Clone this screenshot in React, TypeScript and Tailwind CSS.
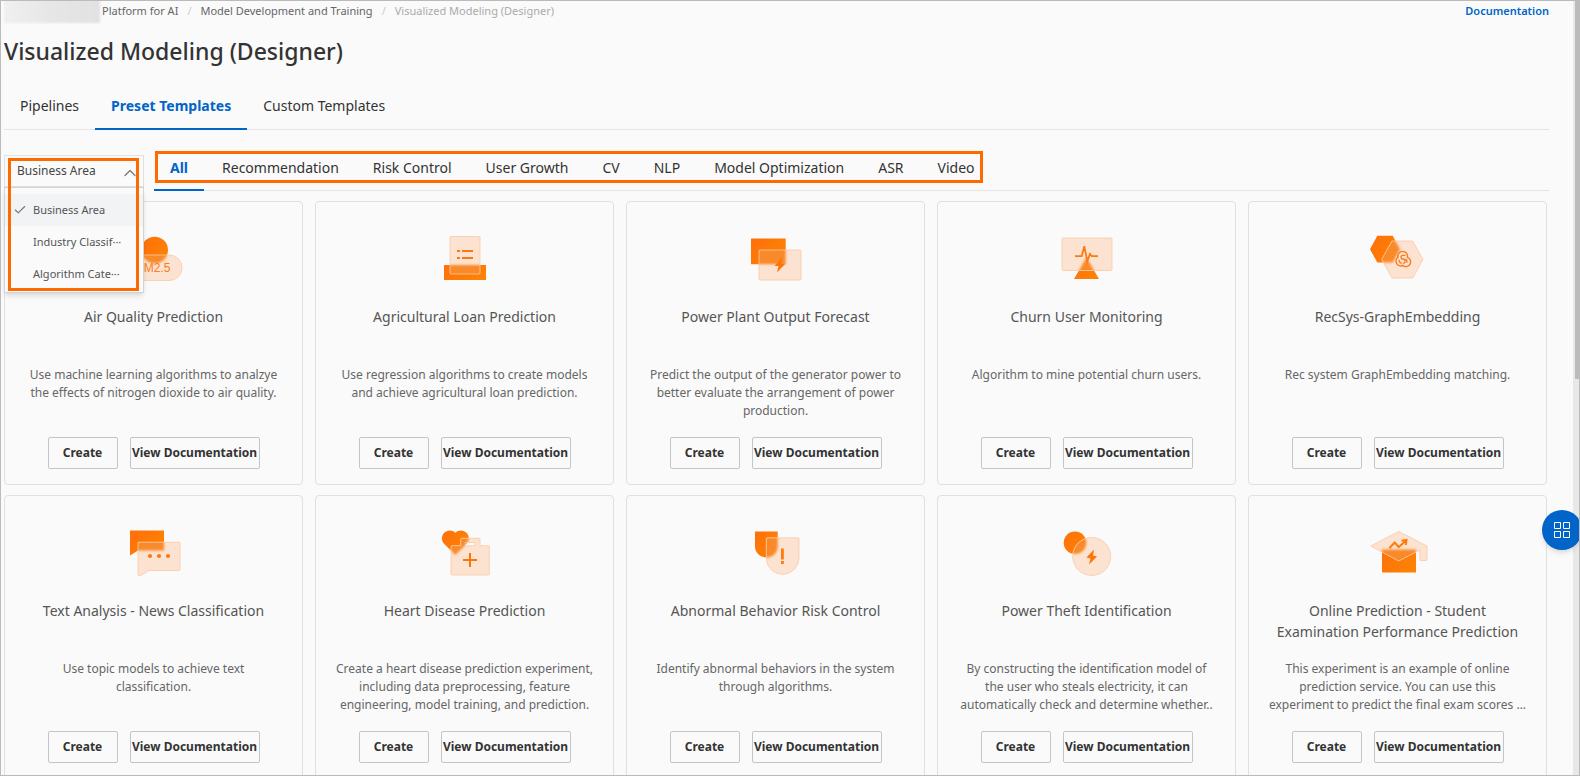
import { useId, useState } from 'react';
import type { ReactNode } from 'react';
import { Check, ChevronUp } from 'lucide-react';

type Art = { back: ReactNode; front: ReactNode; mark: ReactNode };

type Template = { title: string; description: string; art: Art };

const templates: Template[] = [
  {
    title: 'Air Quality Prediction',
    description: 'Use machine learning algorithms to analzye the effects of nitrogen dioxide to air quality.',
    art: {
      back: <circle cx="32.7" cy="16" r="13.3" />,
      front: <rect x="3" y="21" width="57" height="25.5" rx="12.7" />,
      mark: (
        <text x="31" y="38" textAnchor="middle" className="fill-[#ff7a1a] font-['Liberation_Sans'] text-[12px]">
          PM2.5
        </text>
      ),
    },
  },
  {
    title: 'Agricultural Loan Prediction',
    description: 'Use regression algorithms to create models and achieve agricultural loan prediction.',
    art: {
      back: <rect x="11" y="31" width="42" height="15" rx="0.5" />,
      front: <rect x="17" y="2.5" width="30" height="37.5" rx="1" />,
      mark: (
        <path d="M24 17h3M24 24h3M29 17h11M29 24h11" fill="none" stroke="#fb7a16" strokeWidth="2.2" />
      ),
    },
  },
  {
    title: 'Power Plant Output Forecast',
    description: 'Predict the output of the generator power to better evaluate the arrangement of power production.',
    art: {
      back: <rect x="7" y="4.5" width="34.7" height="25.7" rx="0.5" />,
      front: <rect x="15" y="16" width="42" height="30" rx="1" />,
      mark: <path d="M38 23.500l-7.500 8.500h4l-1.500 6.500 8.500-9h-4z" fill="#ff7505" />,
    },
  },
  {
    title: 'Churn User Monitoring',
    description: 'Algorithm to mine potential churn users.',
    art: {
      back: <path d="M31.500 23.500L44 45H19z" />,
      front: <rect x="7" y="4" width="50" height="32.5" rx="1" />,
      mark: (
        <path
          d="M20 22.200h6.700l2.600-10 3 15 2.700-7.400 1.700 2.400H43"
          fill="none"
          stroke="#fc7a12"
          strokeWidth="1.8"
        />
      ),
    },
  },
  {
    title: 'RecSys-GraphEmbedding',
    description: 'Rec system GraphEmbedding matching.',
    art: {
      back: <path d="M4 15.200L11.300 1.800h15.400L34 15.200 26.700 28.500H11.300z" />,
      front: <path d="M15.700 25.300L26 7h20.700L57 25.300 46.700 44H26z" />,
      mark: (
        <g fill="none" stroke="#fb7d1c" strokeWidth="1.4">
          <path d="M32.200 23.800a4.800 4.800 0 1 1 9 0" />
          <path d="M41.200 23.400a4.700 4.700 0 1 1-4.400 8" />
          <path d="M37.400 31.200a4.700 4.700 0 1 1-5.200-8" />
          <path d="M39.600 21.400h-2.800c-2.400 0-2.400 3.600 0 3.600 2.800 0 3.400 3.400.4 4.600" />
          <path d="M33.200 25.600c-.2 2.400 1 3.600 2.600 3.600" />
          <path d="M39.400 25.200c1.600.6 2 2 1.200 3.400" />
        </g>
      ),
    },
  },
  {
    title: 'Text Analysis - News Classification',
    description: 'Use topic models to achieve text\nclassification.',
    art: {
      back: <path d="M8 2.500h34v20H16l-8 5z" />,
      front: <path d="M17 14.200h40a1 1 0 0 1 1 1v26.300a1 1 0 0 1-1 1H27L18 48q-2 .5-2-1.500V15.200a1 1 0 0 1 1-1z" />,
      mark: (
        <g fill="#fb7a16">
          <circle cx="28" cy="28" r="2.1" />
          <circle cx="37" cy="28" r="2.1" />
          <circle cx="46" cy="28" r="2.1" />
        </g>
      ),
    },
  },
  {
    title: 'Heart Disease Prediction',
    description:
      'Create a heart disease prediction experiment, including data preprocessing, feature engineering, model training, and prediction.',
    art: {
      back: <path d="M22.400 4.700C19 1.500 14 1.700 11 5c-3 3.300-2.700 8 .3 11L22.400 27l11-11c3-3 3.300-7.700.3-11C30.700 1.700 25.700 1.500 22.400 4.700z" />,
      front: (
        <path
          clipRule="evenodd"
          fillRule="evenodd"
          d="M19 17.700h8.700v-6.400a1 1 0 0 1 1-1H46a1 1 0 0 1 1 1v6.400h8.300a1 1 0 0 1 1 1v27.300a1 1 0 0 1-1 1H19a1 1 0 0 1-1-1V18.700a1 1 0 0 1 1-1zM32.300 14.500v3.200H42v-3.200z"
        />
      ),
      mark: <path d="M30 32h14M37 25v14" fill="none" stroke="#ff7505" strokeWidth="2" />,
    },
  },
  {
    title: 'Abnormal Behavior Risk Control',
    description: 'Identify abnormal behaviors in the system through algorithms.',
    art: {
      back: <path d="M11 3.500h22.700v14.700a11.350 11.350 0 0 1-22.700 0z" />,
      front: <path d="M22.300 10.800q0-1 1-1H54q1 0 1 1V30a16.350 16.350 0 0 1-32.700 0z" />,
      mark: <path d="M38.400 20.500v11M38.400 33v3" fill="none" stroke="#ff7a0a" strokeWidth="2.800" />,
    },
  },
  {
    title: 'Power Theft Identification',
    description:
      'By constructing the identification model of the user who steals electricity, it can automatically check and determine whether..',
    art: {
      back: <circle cx="20" cy="14.700" r="11.300" />,
      front: <circle cx="36.700" cy="28.500" r="19" />,
      mark: <path d="M39 21.500l-7.500 8 4 1-1.500 6 8-8-4-1z" fill="#ff7505" />,
    },
  },
  {
    title: 'Online Prediction - Student Examination Performance Prediction',
    description:
      'This experiment is an example of online prediction service. You can use this experiment to predict the final exam scores ...',
    art: {
      back: <rect x="16" y="21.500" width="34" height="23" rx="0.500" />,
      front: <path d="M4.700 18L32.700 3.500 61 18v13.500q0 1-1 1h-5q-1 0-1-1V22L32.700 33z" />,
      mark: (
        <path
          d="M23.300 20.300l5.400-5.800 4 4.500 7-6M35.500 12.700l5-.7-.6 5"
          fill="none"
          stroke="#ff7a0a"
          strokeWidth="2"
        />
      ),
    },
  },
];

const mainTabs = ['Pipelines', 'Preset Templates', 'Custom Templates'];

const areas = [
  'All',
  'Recommendation',
  'Risk Control',
  'User Growth',
  'CV',
  'NLP',
  'Model Optimization',
  'ASR',
  'Video',
];

const groupings = [
  { value: 'Business Area', label: 'Business Area' },
  { value: 'Industry Classification', label: 'Industry Classif···' },
  { value: 'Algorithm Category', label: 'Algorithm Cate···' },
];

// Solid orange shape behind a frosted pane, with a small symbol on top
function GlassIcon({ art }: { art: Art }) {
  const id = useId();
  return (
    <svg className="h-12 w-16" viewBox="0 0 64 48" aria-hidden="true">
      <defs>
        <linearGradient id={`${id}g`} x1="0" y1="0" x2="1" y2="0.6">
          <stop offset="0" stopColor="#ff6f0a" />
          <stop offset="1" stopColor="#fd8204" />
        </linearGradient>
        <clipPath id={`${id}c`}>{art.front}</clipPath>
        <filter id={`${id}b`} x="-20%" y="-20%" width="140%" height="140%">
          <feGaussianBlur stdDeviation="1.2" />
        </filter>
      </defs>
      <g fill={`url(#${id}g)`}>{art.back}</g>
      <g fill="#fce2d0">{art.front}</g>
      <g clipPath={`url(#${id}c)`}>
        <g fill="#f98a2c" filter={`url(#${id}b)`}>
          {art.back}
        </g>
      </g>
      <g fill="none" stroke="#fbc9a6" strokeWidth="0.8">
        {art.front}
      </g>
      {art.mark}
    </svg>
  );
}

function TemplateCard({ template }: { template: Template }) {
  return (
    <article className="flex h-[284px] flex-col items-center rounded border border-[#e0e0e0] px-4 pt-8 text-center">
      <GlassIcon art={template.art} />
      <h2 className="mt-6 h-[60px] px-2 text-[14px] leading-[21px] text-[#555]">{template.title}</h2>
      <p className="h-[54px] px-0.5 text-[12px] leading-[18px] whitespace-pre-line text-[#666]">
        {template.description}
      </p>
      <div className="mt-[17px] flex gap-3">
        <button className="h-8 w-[70px] rounded-xs border border-[#c0c6cc] text-[12px] font-bold text-[#333]">
          Create
        </button>
        <button className="flex h-8 w-[130px] items-center justify-center rounded-xs border border-[#c0c6cc] text-[12px] font-bold whitespace-nowrap text-[#333]">
          View Documentation
        </button>
      </div>
    </article>
  );
}

function GroupingSelect() {
  const [grouping, setGrouping] = useState('Business Area');
  return (
    <div className="relative w-[140px]">
      <select
        aria-label="Group templates by"
        value={grouping}
        onChange={(e) => setGrouping(e.target.value)}
        className="block h-8 w-full appearance-none border border-[#e0e0e0] bg-transparent pl-3 text-[12px] text-[#444]"
      >
        {groupings.map((g) => (
          <option key={g.value}>{g.value}</option>
        ))}
      </select>
      <ChevronUp className="pointer-events-none absolute top-2 right-1 size-5 text-[#777]" strokeWidth={1.5} />
      <ul className="absolute top-8 left-0 z-10 w-full border border-[#d0d4d8] bg-[#fafafa] pt-1.5 pb-0.5 shadow-md">
        {groupings.map((g) => (
          <li key={g.value}>
            <button
              onClick={() => setGrouping(g.value)}
              className={`flex h-8 w-full items-center gap-1.5 pl-2 text-[11px] text-[#555] ${
                g.value === grouping ? 'bg-[#f1f3f5]' : ''
              }`}
            >
              <Check
                className={`size-3.5 text-[#777] ${g.value === grouping ? '' : 'invisible'}`}
                strokeWidth={2}
              />
              {g.label}
            </button>
          </li>
        ))}
      </ul>
      <div className="pointer-events-none absolute top-[3px] left-1 z-20 h-[133px] w-[131px] border-3 border-[#ff6a00]" />
    </div>
  );
}

export default function App() {
  const [tab, setTab] = useState('Preset Templates');
  const [area, setArea] = useState('All');

  return (
    <div className="relative flex h-screen overflow-hidden border border-[#bbb] bg-[#fafafa] font-['Noto_Sans',sans-serif] text-[#333]">
      <main className="min-w-0 flex-1 pr-6 pl-[3px]">
        <div className="flex h-5 items-center justify-between text-[11px]">
          <nav aria-label="Breadcrumb" className="flex items-center text-[#666]">
            <span className="h-6 w-24 bg-linear-to-r from-[#f0f0f0] via-[#e6e6e6] to-[#e2e2e2] blur-[1px]" />
            <a href="#platform" className="ml-0.5">Platform for AI</a>
            <span className="mx-[9px] text-[#ccc]">/</span>
            <a href="#models">Model Development and Training</a>
            <span className="mx-[9px] text-[#ccc]">/</span>
            <span className="text-[#aaa]">Visualized Modeling (Designer)</span>
          </nav>
          <a href="#docs" className="font-semibold text-[#0064c8]">Documentation</a>
        </div>

        <h1 className="mt-3 text-[23px] leading-9 font-medium">Visualized Modeling (Designer)</h1>

        <div role="tablist" className="mt-[13px] flex h-12 border-b border-[#e5e5e5]">
          {mainTabs.map((name) => (
            <button
              key={name}
              role="tab"
              aria-selected={name === tab}
              onClick={() => setTab(name)}
              className={`-mb-px border-b-2 px-4 text-[14px] ${
                name === tab ? 'border-[#0064c8] font-bold text-[#0064c8]' : 'border-transparent'
              }`}
            >
              {name}
            </button>
          ))}
        </div>

        <div className="mt-[25px] flex items-start">
          <GroupingSelect />
          <div role="tablist" className="relative ml-[10px] flex h-9 flex-1 gap-0.5 border-b border-[#e5e5e5]">
            {areas.map((name) => (
              <button
                key={name}
                role="tab"
                aria-selected={name === area}
                onClick={() => setArea(name)}
                className={`-mb-px border-b-2 px-4 pb-2.5 text-[14px] ${
                  name === area ? 'border-[#0064c8] font-bold text-[#0064c8]' : 'border-transparent'
                }`}
              >
                {name}
              </button>
            ))}
            <div className="pointer-events-none absolute -top-1 left-px h-8 w-[828px] border-3 border-[#ff6a00]" />
          </div>
        </div>

        <div className="mt-[10px] mr-[2px] grid grid-cols-5 gap-x-3 gap-y-[10px]">
          {templates.map((t) => (
            <TemplateCard key={t.title} template={t} />
          ))}
        </div>
      </main>

      <div className="w-[6px] bg-[#e8e8e8] pl-[2px]">
        <div className="h-[378px] bg-[#bbb]" />
      </div>

      <button
        aria-label="Open app panel"
        className="absolute top-[509px] -right-[3px] flex size-10 items-center justify-center rounded-full bg-[#0064c8] shadow-md"
      >
        <svg className="size-[18px]" viewBox="0 0 18 18" fill="none" stroke="#fff" aria-hidden="true">
          <path d="M1.500 1.500h6v6h-6zM10.500 1.500h6v6h-6zM1.500 10.500h6v6h-6zM10.500 10.500h6v6h-6z" />
        </svg>
      </button>
    </div>
  );
}
